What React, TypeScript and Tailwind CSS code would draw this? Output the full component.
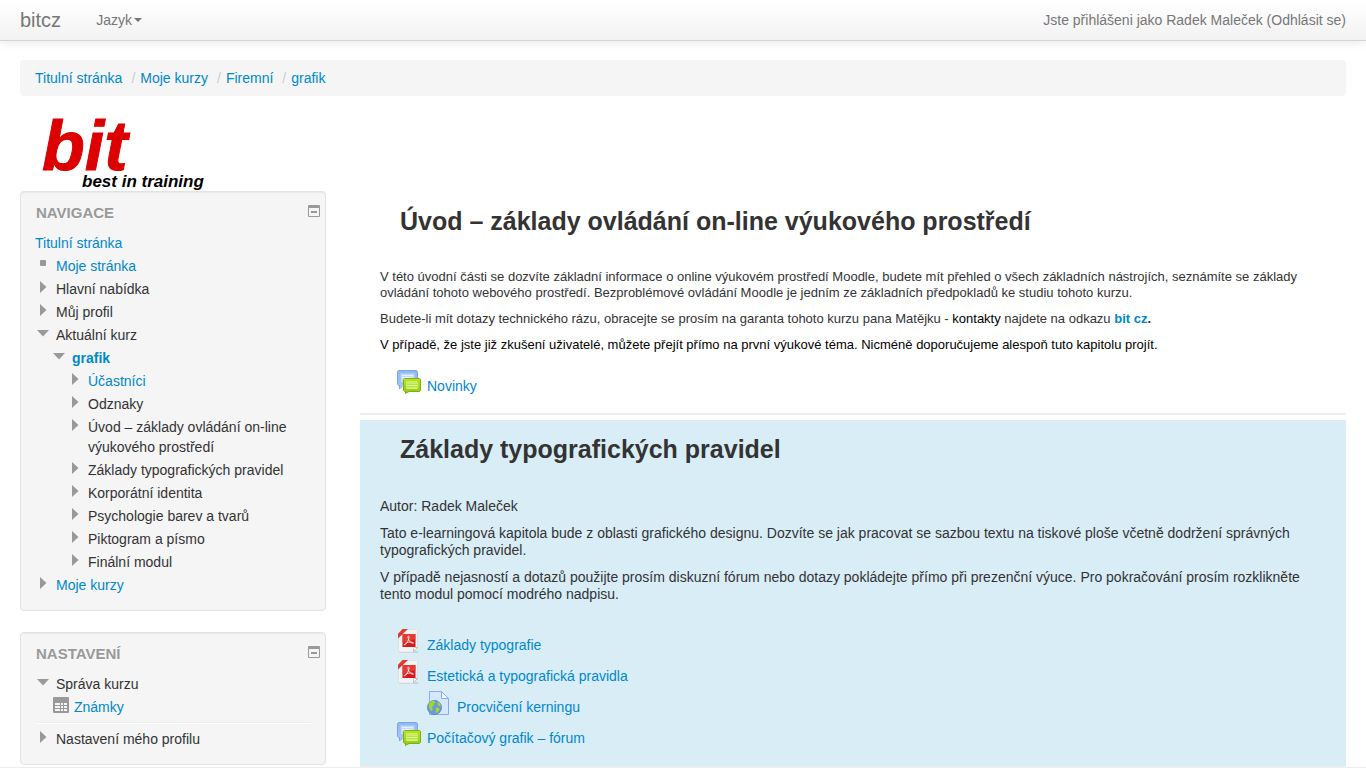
import type { ReactNode } from "react";

type Marker = "leaf" | "closed" | "open";

type TreeItem = {
  label: string;
  marker: Marker;
  depth: number;
  link?: boolean;
  bold?: boolean;
};

const navigation: TreeItem[] = [
  { label: "Moje stránka", marker: "leaf", depth: 0, link: true },
  { label: "Hlavní nabídka", marker: "closed", depth: 0 },
  { label: "Můj profil", marker: "closed", depth: 0 },
  { label: "Aktuální kurz", marker: "open", depth: 0 },
  { label: "grafik", marker: "open", depth: 1, link: true, bold: true },
  { label: "Účastníci", marker: "closed", depth: 2, link: true },
  { label: "Odznaky", marker: "closed", depth: 2 },
  { label: "Úvod – základy ovládání on-line výukového prostředí", marker: "closed", depth: 2 },
  { label: "Základy typografických pravidel", marker: "closed", depth: 2 },
  { label: "Korporátní identita", marker: "closed", depth: 2 },
  { label: "Psychologie barev a tvarů", marker: "closed", depth: 2 },
  { label: "Piktogram a písmo", marker: "closed", depth: 2 },
  { label: "Finální modul", marker: "closed", depth: 2 },
  { label: "Moje kurzy", marker: "closed", depth: 0, link: true },
];

const breadcrumbs = ["Titulní stránka", "Moje kurzy", "Firemní", "grafik"];

const indents = ["", "pl-4", "pl-8"];

function TreeMarker({ marker }: { marker: Marker }) {
  return (
    <svg width="16" height="16" viewBox="0 0 16 16" fill="#999" className="shrink-0" aria-hidden="true">
      {marker === "leaf" && <rect x="5" y="4" width="6" height="6" rx="1" />}
      {marker === "closed" && <path d="M5 2v12l6.5-6z" />}
      {marker === "open" && <path d="M2 5h12l-6 6.5z" />}
    </svg>
  );
}

function TreeRow({ label, marker, depth, link, bold }: TreeItem) {
  return (
    <li className={`flex items-start gap-[5px] ${indents[depth]}`}>
      <TreeMarker marker={marker} />
      {link ? (
        <a href="#" className={bold ? "font-bold text-[#0088cc]" : "text-[#0088cc]"}>{label}</a>
      ) : (
        <button type="button" className="text-left">{label}</button>
      )}
    </li>
  );
}

function Block({ title, children }: { title: string; children: ReactNode }) {
  return (
    <section className="rounded border border-[#e3e3e3] bg-[#f5f5f5] px-3.5 pt-2.5 pb-[15px] shadow-[inset_0_1px_1px_rgba(0,0,0,0.05)]">
      <div className="mb-2.5 -mr-[9px] flex items-start justify-between">
        <h2 className="pt-px pl-px text-[15px] leading-5 font-bold text-[#999] uppercase [text-shadow:0_1px_0_rgba(255,255,255,0.5)]">{title}</h2>
        <button type="button" aria-label={`Skrýt blok ${title}`} className="pt-[3px]">
          <svg width="12" height="12" viewBox="0 0 12 12" aria-hidden="true">
            <path d="M1 0h10a1 1 0 0 1 1 1v10a1 1 0 0 1-1 1H1a1 1 0 0 1-1-1V1a1 1 0 0 1 1-1zm0 3v8h10V3z" fill="#999" fillRule="evenodd" />
            <path d="M3 6h6v2H3z" fill="#999" />
          </svg>
        </button>
      </div>
      {children}
    </section>
  );
}

function Logo() {
  return (
    <svg width="200" height="75" viewBox="0 0 200 75" role="img" aria-label="bit – best in training" className="block overflow-visible">
      <g fontFamily="'Liberation Sans', Arial, sans-serif" fontWeight="bold" fontStyle="italic">
        <text x="22" y="54" fontSize="70" fill="#dc0000" stroke="#dc0000">bit</text>
        <text x="62" y="71" fontSize="17" fill="#000">best in training</text>
      </g>
    </svg>
  );
}

function ForumIcon() {
  return (
    <svg width="24" height="24" viewBox="0 0 24 24" className="shrink-0" aria-hidden="true">
      <defs>
        <linearGradient id="forumBlue" x1="0" y1="0" x2="0" y2="1">
          <stop offset="0" stopColor="#8fb8f6" />
          <stop offset="1" stopColor="#a9c8f8" />
        </linearGradient>
        <linearGradient id="forumGreen" x1="0" y1="0" x2="0" y2="1">
          <stop offset="0" stopColor="#b5e61f" />
          <stop offset="1" stopColor="#8fcb12" />
        </linearGradient>
      </defs>
      <path d="M1.5.5h18l1 1v13l-1 1H6L2.500 19v-3.500h-1l-1-1v-13z" fill="url(#forumBlue)" stroke="#7ba3e6" />
      <path d="M3.500 3.500h14v9h-14z" fill="#c3dafb" stroke="#a7c6f7" />
      <path d="M5 5.500h11M5 7.500h11M5 9.500h11" stroke="#e3eefe" />
      <path d="M7.500 8.500h15l1 1v11l-1 1H12l-3.500 2v-2h-1l-1-1v-11z" fill="url(#forumGreen)" stroke="#7fb012" />
      <path d="M9.500 11.500h11v7h-11z" fill="#b2e03c" stroke="#c9ef55" />
      <path d="M10 13h10M10 15.500h10M10 18h10" stroke="#e3f8a4" />
    </svg>
  );
}

function PdfIcon() {
  return (
    <svg width="24" height="24" viewBox="0 0 24 24" className="shrink-0" aria-hidden="true">
      <path d="M2 22.500h18.500l1 .5-1 .8H2z" fill="#aeb9be" opacity=".7" />
      <path d="M6.500.5h13a1 1 0 0 1 1 1v17l-4 4.500h-14a1 1 0 0 1-1-1V6z" fill="#f3f3f3" stroke="#dfe2e4" />
      <path d="M20.500 18.500l-4 4v-3a1 1 0 0 1 1-1z" fill="#fff" stroke="#b5b5b5" strokeWidth=".8" />
      <path d="M5.500 0H11L1 9.500V4.800z" fill="#df3a32" />
      <path d="M5.500 5h13v13h-13z" fill="#d8171b" />
      <path d="M5.500 5h13v5l-13 4z" fill="#ed4a40" opacity=".7" />
      <path d="M11.300 7c1.400 0 .6 2.600-.2 4.400C10.100 13.700 8.300 16.500 7.300 16c-.8-.7 2-2.500 4.800-2.900 2.500-.3 4.700.3 4.400 1-.4.9-3.600-.7-4.700-3C11 9 10.600 7 11.300 7z" fill="none" stroke="#fff" strokeWidth=".8" />
    </svg>
  );
}

function WebPageIcon() {
  return (
    <svg width="24" height="24" viewBox="0 0 24 24" className="shrink-0" aria-hidden="true">
      <path d="M2.500.5h12l7 7v16h-19z" fill="#d5e7fd" stroke="#84aef0" />
      <path d="M14.500.5v7h7z" fill="#f2f8ff" stroke="#84aef0" />
      <circle cx="7.500" cy="16.500" r="7" fill="#6b98de" stroke="#5f88cc" />
      <path d="M2 13c1-2 3-3.200 5-3l1.500 1.500L6.500 13 7 14.500 4.500 16 6 18l-1.500 2C3 19 1.500 16 2 13z" fill="#a4dd18" />
      <path d="M10.500 10.800c2 .8 3.200 2.600 3.400 4.700L12 15l-1.500-1.500zM9 16.500l3 .5.500 2-2.500 3-1.500-1.500z" fill="#a4dd18" />
    </svg>
  );
}

function Activity({ icon, indent, children }: { icon: ReactNode; indent?: boolean; children: ReactNode }) {
  return (
    <li className={indent ? "pl-[30px]" : ""}>
      <a href="#" className="flex w-fit items-start gap-1.5 text-[#0088cc]">
        {icon}
        <span className="pt-1.5">{children}</span>
      </a>
    </li>
  );
}

export default function App() {
  return (
    <div className="flex min-h-screen flex-col border-b border-[#eee] bg-white font-['Liberation_Sans',Arial,sans-serif] text-sm leading-5 text-[#333]">
      <header className="flex h-[41px] items-center border-b border-[#d4d4d4] bg-linear-to-b from-white to-[#f2f2f2] px-5 text-[#777] shadow-[0_1px_10px_rgba(0,0,0,0.1)]">
        <a href="#" className="mr-[35px] text-xl leading-5">bitcz</a>
        <button type="button" className="flex items-center">
          Jazyk
          <svg width="8" height="4" viewBox="0 0 8 4" fill="#777" className="ml-0.5" aria-hidden="true">
            <path d="M0 0h8L4 4z" />
          </svg>
        </button>
        <p className="ml-auto">
          Jste přihlášeni jako <a href="#">Radek Maleček</a> (<a href="#">Odhlásit se</a>)
        </p>
      </header>

      <div className="px-5 pt-[19px]">
        <nav aria-label="Drobečková navigace" className="mb-5 rounded bg-[#f5f5f5] px-[15px] py-2">
          <ol className="flex">
            {breadcrumbs.map((crumb, i) => (
              <li key={crumb}>
                {i > 0 && <span className="pr-[5px] pl-[9px] text-[#ccc]">/</span>}
                <a href="#" className="text-[#0088cc]">{crumb}</a>
              </li>
            ))}
          </ol>
        </nav>

        <a href="#" className="inline-block align-top">
          <Logo />
        </a>

        <div className="flex items-start gap-[34px]">
          <aside className="flex w-[306px] shrink-0 flex-col gap-[21px]">
            <Block title="Navigace">
              <a href="#" className="mb-[3px] block text-[#0088cc]">Titulní stránka</a>
              <ul className="flex flex-col gap-[3px]">
                {navigation.map((item) => (
                  <TreeRow key={item.label} {...item} />
                ))}
              </ul>
            </Block>

            <Block title="Nastavení">
              <ul className="flex flex-col gap-[3px]">
                <TreeRow label="Správa kurzu" marker="open" depth={0} />
                <li className="pl-[18px]">
                  <a href="#" className="flex items-start gap-[5px] text-[#0088cc]">
                    <svg width="16" height="16" viewBox="0 0 16 16" aria-hidden="true">
                      <rect width="16" height="16" rx="1" fill="#999" />
                      <path d="M2 6h5v2H2zM8 6h2v2H8zM11 6h3v2h-3zM2 9h5v2H2zM8 9h2v2H8zM11 9h3v2h-3zM2 12h5v2H2zM8 12h2v2H8zM11 12h3v2h-3z" fill="#f5f5f5" />
                    </svg>
                    Známky
                  </a>
                </li>
              </ul>
              <hr className="mt-[5px] mb-[5px] h-0.5 border-t border-b border-t-[#eee] border-b-white" />
              <ul>
                <TreeRow label="Nastavení mého profilu" marker="closed" depth={0} />
              </ul>
            </Block>
          </aside>

          <main className="min-w-0 flex-1">
            <section className="mb-[5px] border-b-2 border-[#eee] px-5 pt-2.5 pb-[17px]">
              <h3 className="mb-7 pl-5 text-[25px] leading-10 font-bold">Úvod – základy ovládání on-line výukového prostředí</h3>
              <div className="flex flex-col gap-2.5 text-[13px] leading-4">
                <p>
                  V této úvodní části se dozvíte základní informace o online výukovém prostředí Moodle, budete mít přehled o všech základních nástrojích, seznámíte se základy ovládání tohoto webového prostředí. Bezproblémové ovládání Moodle je jedním ze základních předpokladů ke studiu tohoto kurzu.
                </p>
                <p>
                  Budete-li mít dotazy technického rázu, obracejte se prosím na garanta tohoto kurzu pana Matějku - <span className="text-black">kontakty</span> najdete na odkazu <a href="#" className="font-bold text-[#0088cc]">bit cz</a><b>.</b>
                </p>
                <p className="text-black">
                  V případě, že jste již zkušení uživatelé, můžete přejít přímo na první výukové téma. Nicméně doporučujeme alespoň tuto kapitolu projít.
                </p>
              </div>
              <ul className="mt-[17px] pl-[17px]">
                <Activity icon={<ForumIcon />}>Novinky</Activity>
              </ul>
            </section>

            <section className="border-b border-[#eee] bg-[#d9edf7] px-5 pt-[9px] pb-[18px]">
              <h3 className="mb-[29px] pl-5 text-[25px] leading-10 font-bold">Základy typografických pravidel</h3>
              <div className="flex flex-col gap-2.5 leading-[17px]">
                <p>Autor: Radek Maleček</p>
                <p>
                  Tato e-learningová kapitola bude z oblasti grafického designu. Dozvíte se jak pracovat se sazbou textu na tiskové ploše včetně dodržení správných typografických pravidel.
                </p>
                <p>
                  V případě nejasností a dotazů použijte prosím diskuzní fórum nebo dotazy pokládejte přímo při prezenční výuce. Pro pokračování prosím rozklikněte tento modul pomocí modrého nadpisu.
                </p>
              </div>
              <ul className="mt-[26px] flex flex-col gap-[5px] pl-[17px]">
                <Activity icon={<PdfIcon />}>Základy typografie</Activity>
                <Activity icon={<PdfIcon />}>Estetická a typografická pravidla</Activity>
                <Activity icon={<WebPageIcon />} indent>Procvičení kerningu</Activity>
                <Activity icon={<ForumIcon />}>Počítačový grafik – fórum</Activity>
              </ul>
            </section>
          </main>
        </div>
      </div>
    </div>
  );
}
